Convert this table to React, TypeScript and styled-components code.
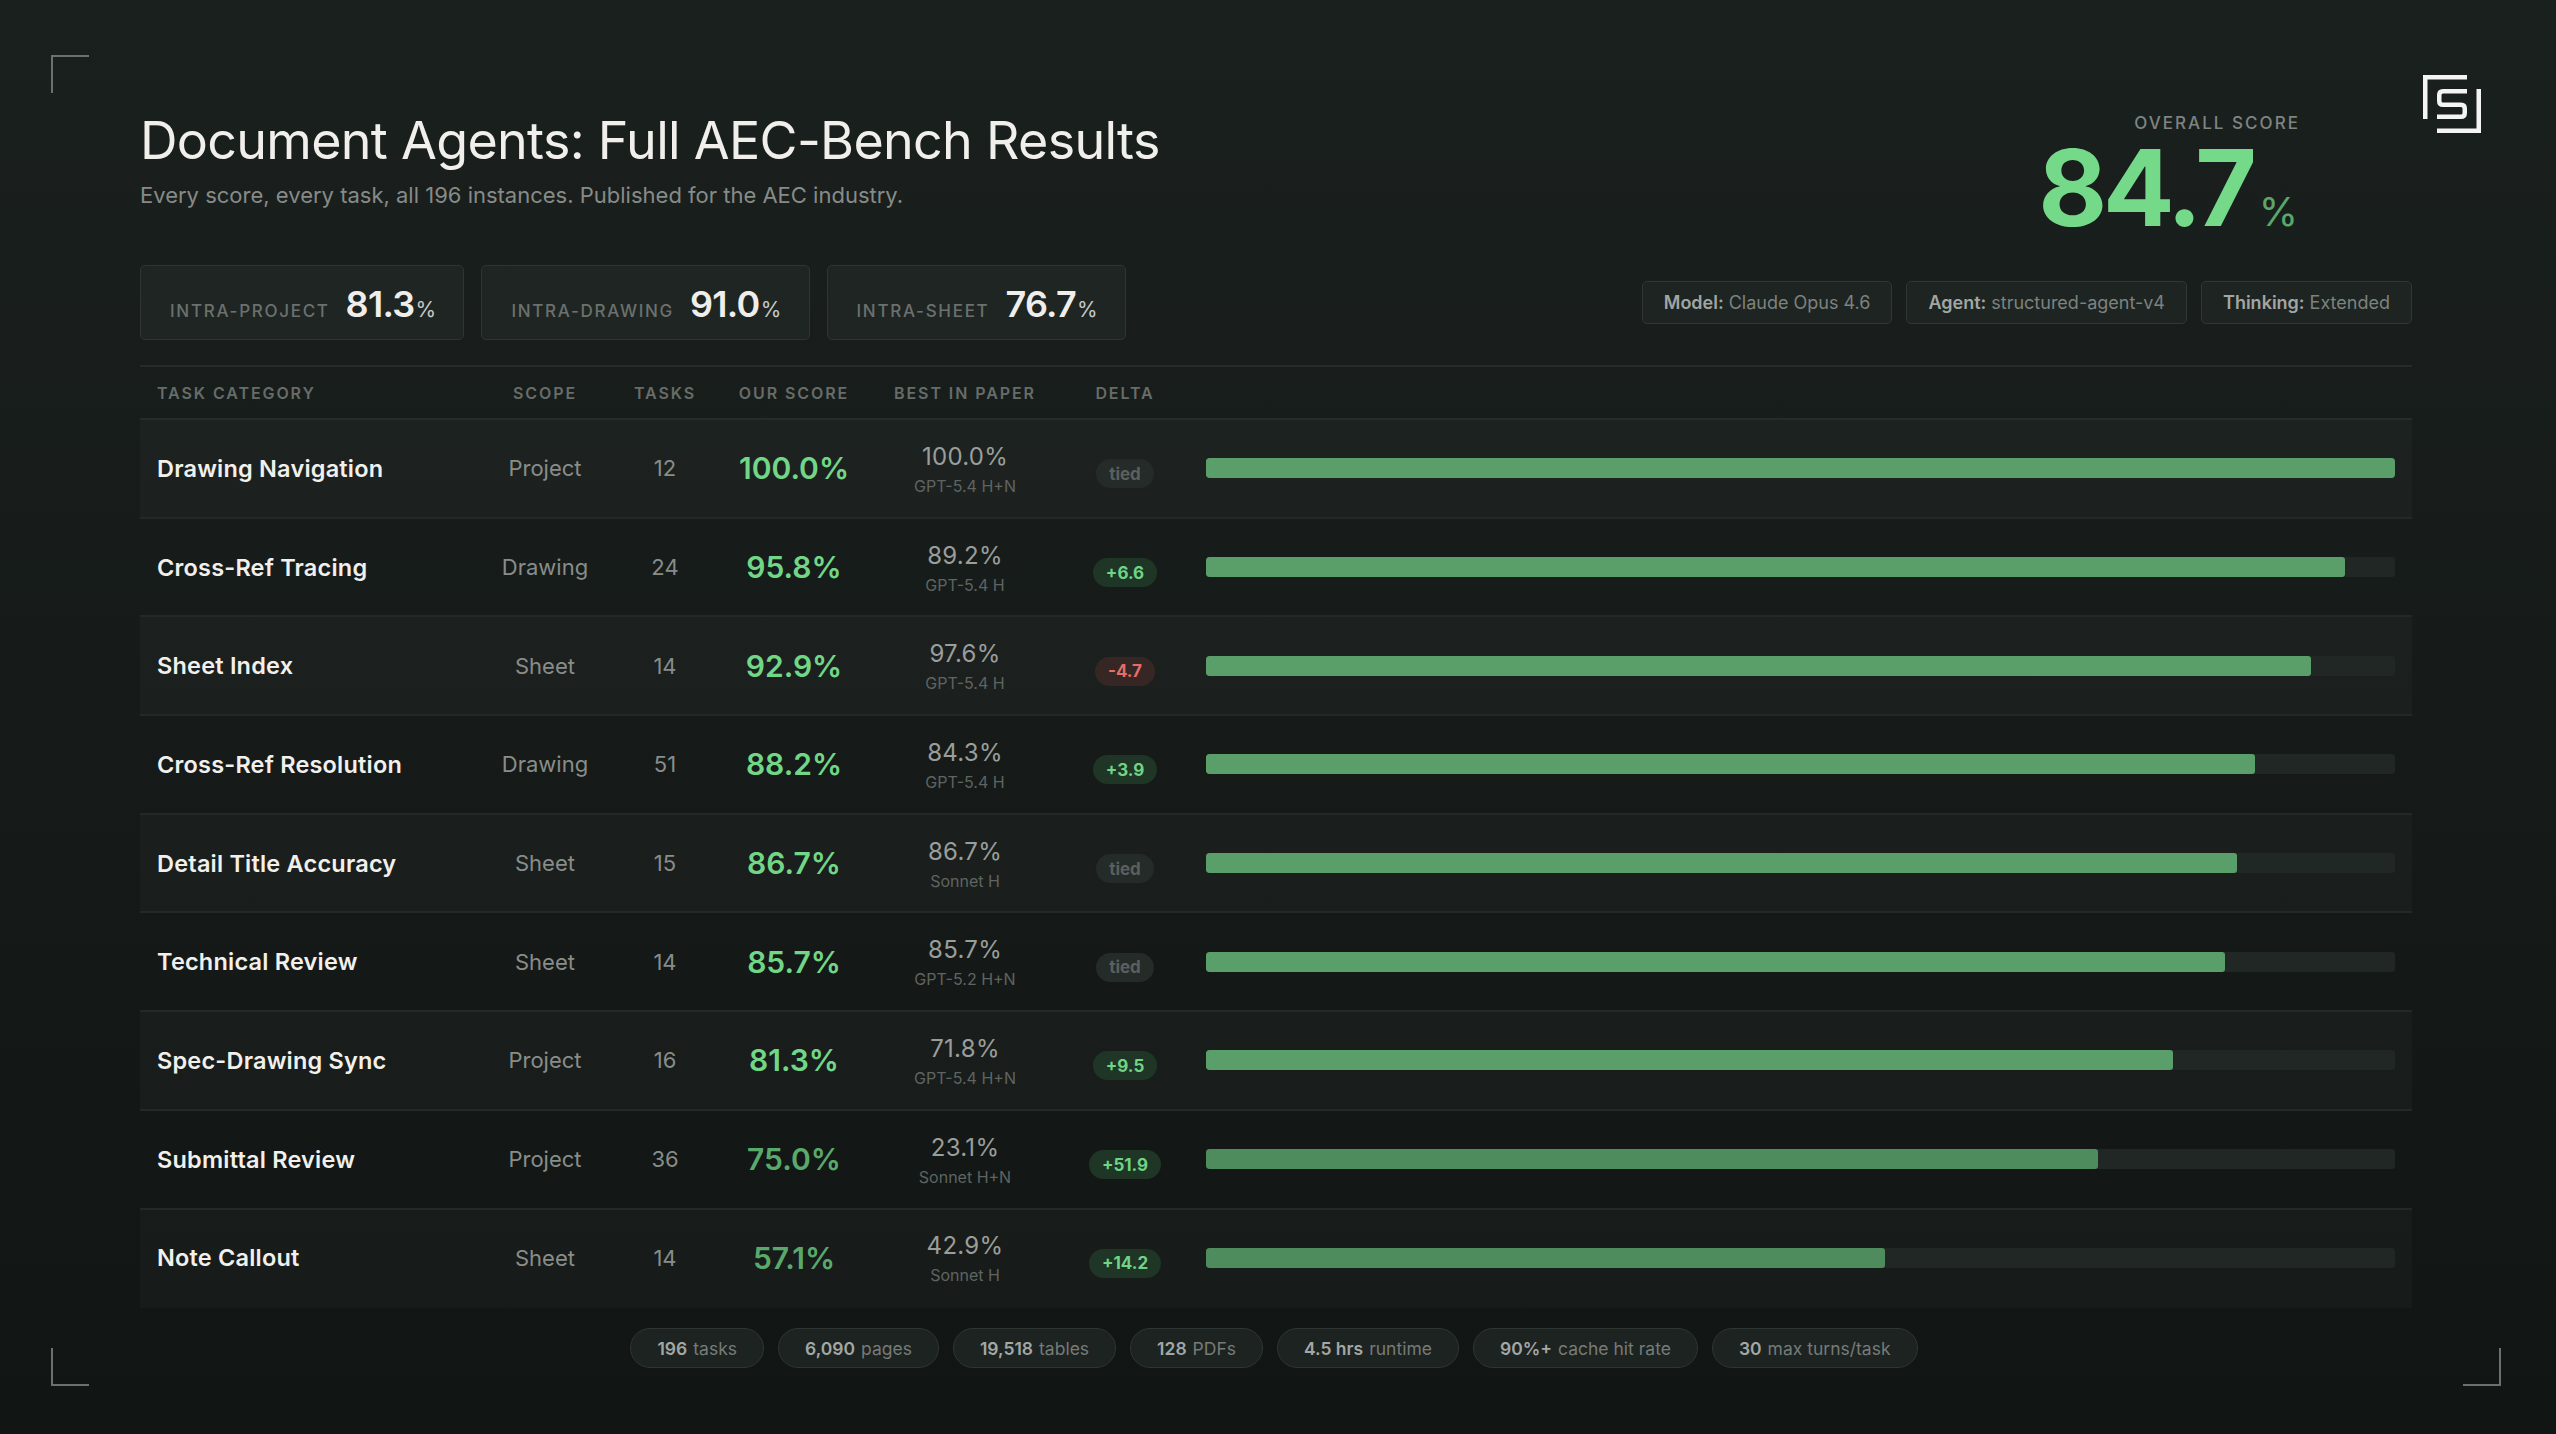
import { FC } from "react";
import styled, { createGlobalStyle } from "styled-components";

const GlobalStyle = createGlobalStyle`
  html, body {
    margin: 0;
    padding: 0;
    background: #141917;
  }
  body {
    font-family: "Inter", "Noto Sans", sans-serif;
    -webkit-font-smoothing: antialiased;
  }
`;

type Row = {
  name: string;
  scope: string;
  tasks: number;
  score: number;
  best: string;
  bestBy: string;
  delta: string;
};

const rows: Row[] = [
  { name: "Drawing Navigation", scope: "Project", tasks: 12, score: 100.0, best: "100.0%", bestBy: "GPT-5.4 H+N", delta: "tied" },
  { name: "Cross-Ref Tracing", scope: "Drawing", tasks: 24, score: 95.8, best: "89.2%", bestBy: "GPT-5.4 H", delta: "+6.6" },
  { name: "Sheet Index", scope: "Sheet", tasks: 14, score: 92.9, best: "97.6%", bestBy: "GPT-5.4 H", delta: "-4.7" },
  { name: "Cross-Ref Resolution", scope: "Drawing", tasks: 51, score: 88.2, best: "84.3%", bestBy: "GPT-5.4 H", delta: "+3.9" },
  { name: "Detail Title Accuracy", scope: "Sheet", tasks: 15, score: 86.7, best: "86.7%", bestBy: "Sonnet H", delta: "tied" },
  { name: "Technical Review", scope: "Sheet", tasks: 14, score: 85.7, best: "85.7%", bestBy: "GPT-5.2 H+N", delta: "tied" },
  { name: "Spec-Drawing Sync", scope: "Project", tasks: 16, score: 81.3, best: "71.8%", bestBy: "GPT-5.4 H+N", delta: "+9.5" },
  { name: "Submittal Review", scope: "Project", tasks: 36, score: 75.0, best: "23.1%", bestBy: "Sonnet H+N", delta: "+51.9" },
  { name: "Note Callout", scope: "Sheet", tasks: 14, score: 57.1, best: "42.9%", bestBy: "Sonnet H", delta: "+14.2" },
];

const sections = [
  { label: "Intra-Project", value: "81.3" },
  { label: "Intra-Drawing", value: "91.0" },
  { label: "Intra-Sheet", value: "76.7" },
];

const meta = [
  { key: "Model:", value: "Claude Opus 4.6" },
  { key: "Agent:", value: "structured-agent-v4" },
  { key: "Thinking:", value: "Extended" },
];

const stats = [
  { n: "196", label: "tasks" },
  { n: "6,090", label: "pages" },
  { n: "19,518", label: "tables" },
  { n: "128", label: "PDFs" },
  { n: "4.5 hrs", label: "runtime" },
  { n: "90%+", label: "cache hit rate" },
  { n: "30", label: "max turns/task" },
];

const Page = styled.div`
  position: relative;
  width: 2556px;
  height: 1434px;
  box-sizing: border-box;
  padding: 115px 144px 0 140px;
  background: linear-gradient(180deg, #1a201e 0%, #161b19 50%, #111513 100%);
  overflow: hidden;
`;

const Corner = styled.div<{ pos: "tl" | "bl" | "br" }>`
  position: absolute;
  width: 36px;
  height: 36px;
  border-color: #6c706e;
  border-style: solid;
  border-width: 0;
  ${({ pos }) =>
    pos === "tl"
      ? "left: 51px; top: 55px; border-top-width: 2px; border-left-width: 2px;"
      : pos === "bl"
      ? "left: 51px; top: 1348px; border-bottom-width: 2px; border-left-width: 2px;"
      : "left: 2463px; top: 1348px; border-bottom-width: 2px; border-right-width: 2px;"}
`;

const Logo = styled.svg`
  position: absolute;
  left: 2423px;
  top: 75px;
  width: 58px;
  height: 58px;
`;

const Header = styled.div`
  display: flex;
  justify-content: space-between;
  align-items: flex-start;
`;

const TitleBlock = styled.div`
  display: flex;
  flex-direction: column;
  gap: 17px;
`;

const Title = styled.h1`
  margin: 0;
  font-size: 52px;
  line-height: 52px;
  font-weight: 400;
  letter-spacing: -0.7px;
  color: #f1efec;
`;

const Subtitle = styled.p`
  margin: 0;
  font-size: 22px;
  line-height: 22px;
  color: #878b88;
`;

const ScoreBlock = styled.div`
  margin-right: 114px;
  display: flex;
  flex-direction: column;
  align-items: flex-end;
  gap: 3px;
`;

const ScoreLabel = styled.div`
  font-size: 17px;
  line-height: 17px;
  font-weight: 500;
  letter-spacing: 0.12em;
  margin-right: -2px;
  color: #7f8481;
  text-transform: uppercase;
`;

const ScoreValue = styled.div`
  height: 106px;
  display: flex;
  align-items: baseline;
  font-size: 106px;
  line-height: 106px;
  font-weight: 700;
  letter-spacing: -0.04em;
  color: #75d98a;
`;

const ScoreUnit = styled.span`
  margin-left: 6px;
  font-size: 40px;
  line-height: 40px;
  font-weight: 400;
  letter-spacing: 0;
  color: #5aa76b;
`;

const StatsRow = styled.div`
  margin-top: 24px;
  display: flex;
  justify-content: space-between;
  align-items: center;
`;

const Cards = styled.div`
  display: flex;
  gap: 17px;
`;

const Card = styled.div`
  height: 75px;
  box-sizing: border-box;
  padding: 20px 28px 0 29px;
  display: flex;
  align-items: baseline;
  justify-content: center;
  gap: 16px;
  background: #1f2523;
  border: 1px solid #2f3533;
  border-radius: 5px;
`;

const CardLabel = styled.span`
  font-size: 17px;
  font-weight: 500;
  letter-spacing: 0.1em;
  text-transform: uppercase;
  color: #6c716e;
`;

const CardValue = styled.span`
  font-size: 36px;
  line-height: 36px;
  font-weight: 600;
  letter-spacing: -0.02em;
  color: #efeeeb;
`;

const CardUnit = styled.span`
  margin-left: 1px;
  font-size: 21px;
  font-weight: 400;
  color: #c7cac8;
`;

const Chips = styled.div`
  display: flex;
  gap: 14px;
`;

const Chip = styled.div`
  height: 43px;
  box-sizing: border-box;
  padding: 0 21px;
  display: flex;
  align-items: center;
  gap: 5px;
  font-size: 18px;
  background: #1e2422;
  border: 1px solid #313735;
  border-radius: 5px;
`;

const ChipKey = styled.span`
  font-weight: 600;
  color: #a2a6a3;
`;

const ChipValue = styled.span`
  color: #7d827f;
`;

const Table = styled.div`
  margin-top: 25px;
  border-top: 2px solid #262c2a;
`;

const Grid = styled.div`
  display: grid;
  grid-template-columns: 323px 130px 110px 148px 194px 126px 1fr;
  align-items: center;
  padding: 0 17px;
`;

const HeadRow = styled(Grid)`
  height: 51px;
  border-bottom: 2px solid #262c2a;
`;

const HeadCell = styled.div<{ left?: boolean }>`
  text-align: ${({ left }) => (left ? "left" : "center")};
  font-size: 16px;
  font-weight: 600;
  letter-spacing: 0.12em;
  text-transform: uppercase;
  color: #676c69;
`;

const BodyRow = styled(Grid)<{ shade: boolean }>`
  height: 96.7px;
  background: ${({ shade }) => (shade ? "rgba(255, 255, 255, 0.025)" : "transparent")};
  border-bottom: 2px solid #232927;
  &:last-child {
    border-bottom-color: transparent;
  }
`;

const Name = styled.div`
  font-size: 23.5px;
  font-weight: 600;
  letter-spacing: 0.2px;
  color: #f1f0ed;
`;

const Plain = styled.div`
  text-align: center;
  font-size: 22px;
  color: #898d8a;
`;

const Score = styled.div<{ high: boolean }>`
  text-align: center;
  font-size: 30px;
  font-weight: 600;
  color: ${({ high }) => (high ? "#72d687" : "#5aa96c")};
`;

const Best = styled.div`
  display: flex;
  flex-direction: column;
  align-items: center;
  gap: 9px;
  margin-top: 2px;
`;

const BestValue = styled.div`
  font-size: 24px;
  line-height: 24px;
  letter-spacing: 0.3px;
  color: #9a9e9b;
`;

const BestBy = styled.div`
  font-size: 16px;
  line-height: 16px;
  color: #5f6461;
`;

const DeltaCell = styled.div`
  display: flex;
  justify-content: center;
  margin-top: 11px;
`;

const Delta = styled.span<{ kind: "up" | "down" | "tie" }>`
  height: 29px;
  padding: 0 13px;
  display: inline-flex;
  align-items: center;
  border-radius: 15px;
  font-size: 17px;
  font-weight: 700;
  background: ${({ kind }) =>
    kind === "up" ? "#1f3526" : kind === "down" ? "#362725" : "#252b29"};
  color: ${({ kind }) =>
    kind === "up" ? "#6fd485" : kind === "down" ? "#e56e66" : "#5b605d"};
`;

const BarCell = styled.div`
  padding-left: 18px;
`;

const Track = styled.div`
  height: 20px;
  border-radius: 3px;
  background: #202725;
  overflow: hidden;
`;

const Fill = styled.div<{ high: boolean }>`
  height: 100%;
  border-radius: 3px;
  background: ${({ high }) => (high ? "#5a9f69" : "#4f8c5d")};
`;

const Footer = styled.div`
  margin-top: 20px;
  margin-left: -4px;
  display: flex;
  justify-content: center;
  gap: 14px;
`;

const Pill = styled.div`
  height: 40px;
  box-sizing: border-box;
  padding: 0 26px;
  display: flex;
  align-items: center;
  gap: 6px;
  font-size: 17.5px;
  background: #1d2321;
  border: 1px solid #2f3533;
  border-radius: 20px;
`;

const PillNum = styled.span`
  font-weight: 600;
  color: #a3a7a4;
`;

const PillLabel = styled.span`
  color: #767b78;
`;

const deltaKind = (d: string) => (d === "tied" ? "tie" : d.startsWith("-") ? "down" : "up");

const App: FC = () => (
  <Page>
    <GlobalStyle />
    <Corner pos="tl" />
    <Corner pos="bl" />
    <Corner pos="br" />
    <Logo viewBox="0 0 58 58" fill="none" stroke="#f4f4f2" strokeWidth="4.5">
      <path d="M2.25 44 V2.25 H44" />
      <path d="M14 55.75 H55.75 V14" />
      <path d="M44 16.25 H20 Q16.25 16.25 16.25 20 V26 Q16.25 29.75 20 29.75 H38 Q41.75 29.75 41.75 33.5 V38 Q41.75 41.75 38 41.75 H14" />
    </Logo>

    <Header>
      <TitleBlock>
        <Title>Document Agents: Full AEC-Bench Results</Title>
        <Subtitle>Every score, every task, all 196 instances. Published for the AEC industry.</Subtitle>
      </TitleBlock>
      <ScoreBlock>
        <ScoreLabel>Overall Score</ScoreLabel>
        <ScoreValue>
          84.7<ScoreUnit>%</ScoreUnit>
        </ScoreValue>
      </ScoreBlock>
    </Header>

    <StatsRow>
      <Cards>
        {sections.map(({ label, value }) => (
          <Card key={label}>
            <CardLabel>{label}</CardLabel>
            <CardValue>
              {value}
              <CardUnit>%</CardUnit>
            </CardValue>
          </Card>
        ))}
      </Cards>
      <Chips>
        {meta.map(({ key, value }) => (
          <Chip key={key}>
            <ChipKey>{key}</ChipKey>
            <ChipValue>{value}</ChipValue>
          </Chip>
        ))}
      </Chips>
    </StatsRow>

    <Table>
      <HeadRow>
        <HeadCell left>Task Category</HeadCell>
        <HeadCell>Scope</HeadCell>
        <HeadCell>Tasks</HeadCell>
        <HeadCell>Our Score</HeadCell>
        <HeadCell>Best in Paper</HeadCell>
        <HeadCell>Delta</HeadCell>
        <div />
      </HeadRow>
      {rows.map((row, i) => (
        <BodyRow key={row.name} shade={i % 2 === 0}>
          <Name>{row.name}</Name>
          <Plain>{row.scope}</Plain>
          <Plain>{row.tasks}</Plain>
          <Score high={row.score >= 80}>{row.score.toFixed(1)}%</Score>
          <Best>
            <BestValue>{row.best}</BestValue>
            <BestBy>{row.bestBy}</BestBy>
          </Best>
          <DeltaCell>
            <Delta kind={deltaKind(row.delta)}>{row.delta}</Delta>
          </DeltaCell>
          <BarCell>
            <Track>
              <Fill high={row.score >= 80} style={{ width: `${row.score}%` }} />
            </Track>
          </BarCell>
        </BodyRow>
      ))}
    </Table>

    <Footer>
      {stats.map(({ n, label }) => (
        <Pill key={label}>
          <PillNum>{n}</PillNum>
          <PillLabel>{label}</PillLabel>
        </Pill>
      ))}
    </Footer>
  </Page>
);

export default App;
